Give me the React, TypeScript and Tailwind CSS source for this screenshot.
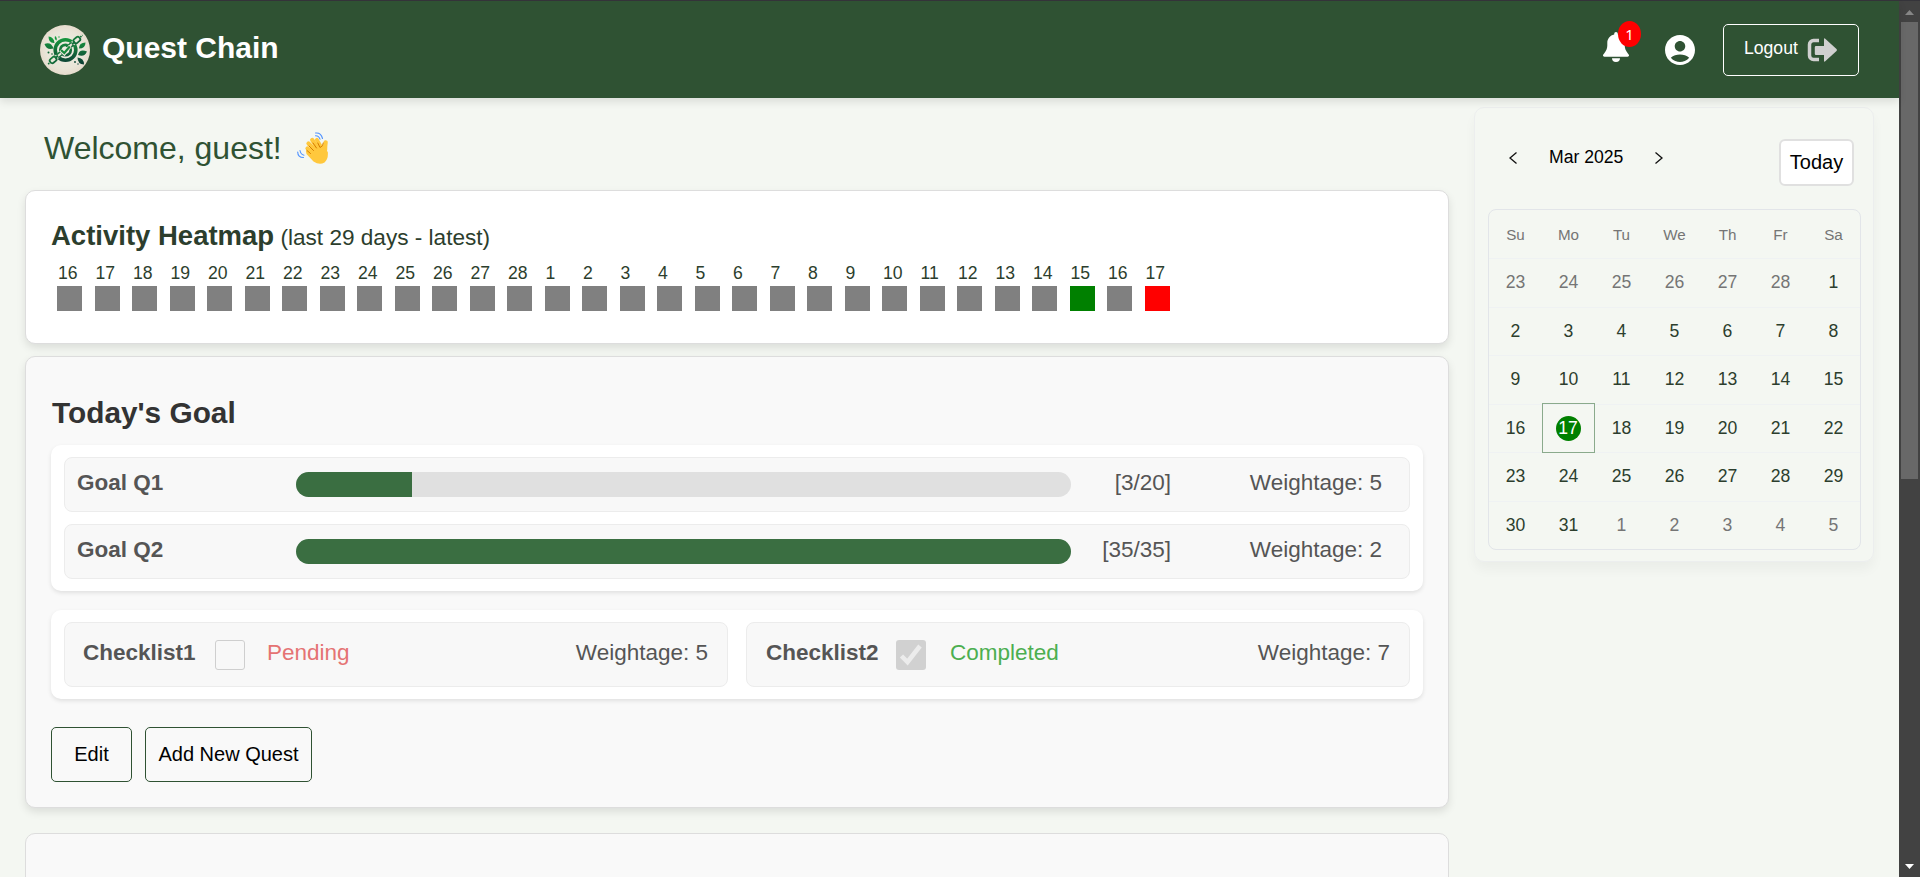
import React from "react";

const heat: [number, string][] = [
  ...[16, 17, 18, 19, 20, 21, 22, 23, 24, 25, 26, 27, 28, 1, 2, 3, 4, 5, 6, 7, 8, 9, 10, 11, 12, 13, 14].map(
    (d): [number, string] => [d, "bg-[#808080]"],
  ),
  [15, "bg-[#008000]"],
  [16, "bg-[#808080]"],
  [17, "bg-[#ff0000]"],
];

const weeks = [
  [23, 24, 25, 26, 27, 28, 1],
  [2, 3, 4, 5, 6, 7, 8],
  [9, 10, 11, 12, 13, 14, 15],
  [16, 17, 18, 19, 20, 21, 22],
  [23, 24, 25, 26, 27, 28, 29],
  [30, 31, 1, 2, 3, 4, 5],
];

function Logo() {
  return (
    <svg viewBox="0 0 50 50" className="mt-px h-[50px] w-[50px]">
      <defs>
        <linearGradient id="leaf" x1="0" y1="10" x2="0" y2="40" gradientUnits="userSpaceOnUse">
          <stop offset="0" stopColor="#17a23f" />
          <stop offset="0.5" stopColor="#14703a" />
          <stop offset="1" stopColor="#0b3a33" />
        </linearGradient>
        <radialGradient id="disc">
          <stop offset="0" stopColor="#eeeee2" />
          <stop offset="0.75" stopColor="#e9e5d8" />
          <stop offset="1" stopColor="#e6dccd" />
        </radialGradient>
      </defs>
      <circle cx="25" cy="25" r="25" fill="url(#disc)" />
      <g fill="none" stroke="url(#leaf)">
        <circle cx="25.500" cy="25" r="10.300" strokeWidth="3.600" />
        <circle cx="25.500" cy="25" r="5.200" strokeWidth="2.800" />
      </g>
      <g fill="url(#leaf)">
        <path d="M8.500 11.500q5.500.500 6 6.500q-6 .500-6-6.500z" />
        <path d="M4.500 19q6.500-2.500 9 4.500q-7 2-9-4.500z" />
        <path d="M15 11q2.500 1.500 1.500 4.500q-2.500-1.500-1.500-4.500z" />
        <path d="M47 26.500q-7.500-3-9 3.500q6.500 2.500 9-3.500z" />
        <path d="M45.500 17.500q-6.500 0-6.500 6q6.500 0 6.500-6z" />
        <path d="M44 39.500q-6.500-.500-6.500-7q6.500.500 6.500 7z" />
        <circle cx="8.500" cy="27.500" r="1" />
        <circle cx="12" cy="29" r=".8" />
        <circle cx="35" cy="37" r=".9" />
        <circle cx="38" cy="39" r=".7" />
        <circle cx="19" cy="12" r=".7" />
      </g>
      <g transform="rotate(-40 25 25)" fill="none">
        <path d="M9 25H20M30 25H41" stroke="#e9e7da" strokeWidth="4.600" />
        <g stroke="url(#leaf)" strokeWidth="1.800">
          <path d="M3 25h3M45 25h3" strokeDasharray="1.500 1" />
          <rect x="6" y="22.600" width="7" height="4.800" rx="2" fill="#e9e7da" />
          <rect x="37" y="22.600" width="7" height="4.800" rx="2" fill="#e9e7da" />
          <path d="M12 25h4M34 25h4" />
          <path d="M15 23.300h7M15 26.700h7M28 23.300h7M28 26.700h7" strokeWidth="1.400" />
        </g>
      </g>
      <path d="M20.500 25l3.800 3.500 6-7.500" fill="none" stroke="#e9e7da" strokeWidth="3.600" />
      <path d="M21 25l3.300 3 5.500-6.500" fill="none" stroke="#168a3c" strokeWidth="2.200" />
    </svg>
  );
}

function Wave() {
  return (
    <svg viewBox="0 0 32 32" className="h-8 w-8">
      <g fill="none" stroke="#ffc83d" strokeLinecap="round">
        <path d="M10.500 16.500L19 24" strokeWidth="4.200" />
        <path d="M11.500 11.500L20 20" strokeWidth="4.200" />
        <path d="M15.200 8L22 18" strokeWidth="4.200" />
        <path d="M19.800 7.800L24 15" strokeWidth="3.800" />
        <path d="M28.600 10.500Q28 14 28 18" strokeWidth="4.400" />
      </g>
      <path
        d="M9 19.500Q8.500 17.500 11 18L20 11L26 14L30.800 20Q31.500 27 27.500 30.500Q22.500 33.500 16.500 29.500L9.500 22Z"
        fill="#ffc83d"
      />
      <g fill="none" stroke="#d67d00" strokeWidth="1" strokeLinecap="round">
        <path d="M10 18.500l3.500 3M12 14l4.500 4.500M16 11l3.500 5M20.800 11l2.200 4.500Q26.300 14.500 26.300 11" />
      </g>
      <g fill="none" stroke="#5092ff" strokeWidth="1.100" strokeLinecap="round">
        <path d="M18.500 1Q24 .300 25.500 6.500M18.500 3.700Q21.800 3.500 23 7.200M.700 20Q.800 25.500 6.500 25.500M3 18.500Q3.800 22.500 7 23.200" />
      </g>
    </svg>
  );
}

function Goal({ name, pct, count, weight }: { name: string; pct: number; count: string; weight: number }) {
  return (
    <div className="flex h-[55px] items-center rounded-lg border border-[#ececec] bg-[#f8f8f8] pl-3">
      <div className="w-[219px] pb-[3px] font-bold">{name}</div>
      <div className="h-[25px] w-[775px] overflow-hidden rounded-[12.5px] bg-[#e0e0e0]">
        <div className="h-full bg-[#3a6e41]" style={{ width: `${pct}%` }} />
      </div>
      <div className="w-[100px] pb-[3px] text-right">{count}</div>
      <div className="w-[211px] pb-[3px] text-right">Weightage: {weight}</div>
    </div>
  );
}

function Check({ name, done, weight }: { name: string; done: boolean; weight: number }) {
  return (
    <div className="flex h-[65px] flex-1 items-center rounded-lg border border-[#ececec] bg-[#f8f8f8] pr-[19px] pl-[18px]">
      <div className={done ? "w-[131px] pb-[3px] pl-px font-bold" : "w-[132px] pb-[3px] font-bold"}>{name}</div>
      {done ? (
        <div className="flex h-[30px] w-[30px] items-center justify-center rounded-[3px] bg-[#d1d1d1]">
          <svg viewBox="0 0 30 30" className="h-[30px] w-[30px]">
            <path d="M5.500 16l6 6L24 6" fill="none" stroke="#ececec" strokeWidth="4.500" />
          </svg>
        </div>
      ) : (
        <div className="h-[30px] w-[30px] rounded-[3px] border border-[#cfcfcf]" />
      )}
      <div className={done ? "ml-[24px] pb-[3px] text-[#4caf50]" : "ml-[22px] pb-[3px] text-[#e57373]"}>
        {done ? "Completed" : "Pending"}
      </div>
      <div className="ml-auto pb-[3px]">Weightage: {weight}</div>
    </div>
  );
}

export default function App() {
  return (
    <div className="flex h-[877px] w-[1920px] flex-col overflow-hidden bg-[#f4f7f2] font-['Liberation_Sans',Arial,sans-serif] text-[#2c3e2d]">
      <div className="h-px shrink-0 bg-[#35343a]" />
      <div className="flex min-h-0 flex-1">
        <div className="flex w-[1899px] flex-col">
          <header className="z-10 flex h-[97px] shrink-0 items-center bg-[#2f5233] pr-[40px] pb-px pl-10 text-white shadow-[0_4px_8px_rgba(0,0,0,0.1)]">
            <Logo />
            <div className="ml-[12px] pb-[2px] text-[30px] leading-[36px] font-bold">Quest Chain</div>
            <div className="ml-auto flex items-center">
              <div className="relative h-[30px] w-[26px]">
                <svg viewBox="0 0 26 30" className="-mt-[2px] h-[30px] w-[26px]" fill="#fff">
                  <path d="M13 0a1.800 1.800 0 0 0-1.800 1.800v.8C7 3.500 4.300 6.800 4.300 11v2.600c0 3-1 5.200-3 7.600-.9 1-1.300 1.500-1.300 2.400C0 24.300.6 24.800 1.400 24.800h23.200c.8 0 1.400-.5 1.400-1.200 0-.9-.4-1.400-1.300-2.400-2-2.400-3-4.600-3-7.600V11c0-4.200-2.700-7.500-6.900-8.400v-.8A1.800 1.800 0 0 0 13 0zM9 26.300h8a4 3.700 0 0 1-8 0z" />
                </svg>
                <div className="absolute -top-[13px] left-[15px] flex h-[26px] w-[23px] items-center justify-center rounded-[50%] bg-[#ff0000] font-['Noto_Sans'] text-[15px] leading-none">
                  1
                </div>
              </div>
              <svg viewBox="2 2 20 20" className="mt-px ml-[36px] h-[30px] w-[30px]" fill="#fff">
                <path d="M12 2C6.480 2 2 6.480 2 12s4.480 10 10 10 10-4.480 10-10S17.520 2 12 2zm0 4c1.930 0 3.500 1.570 3.500 3.500S13.930 13 12 13s-3.500-1.570-3.500-3.500S10.070 6 12 6zm0 14c-2.030 0-4.430-.82-6.140-2.880C7.550 15.800 9.680 15 12 15s4.450.8 6.140 2.120C16.430 19.180 14.030 20 12 20z" />
              </svg>
              <div className="mt-[2px] ml-[28px] flex h-[52px] w-[136px] items-center rounded-[5px] border border-white pl-[20px] text-[17.6px]">
                <span className="pb-[3px]">Logout</span>
                <svg viewBox="0 0 30 24" className="ml-[9px] h-6 w-[30px]" fill="#d0d0d0">
                  <path d="M12 2.500H6.500A4 4 0 0 0 2.500 6.500v11A4 4 0 0 0 6.500 21.500H12" fill="none" stroke="#d0d0d0" strokeWidth="3.500" />
                  <path d="M9 8h8V1.500q0-2 1.500-.6l11 10.100q.8 1 0 2l-11 10.100q-1.500 1.400-1.500-.6V17H9q-1.200 0-1.200-1.200V9.200Q7.800 8 9 8z" />
                </svg>
              </div>
            </div>
          </header>
          <div className="flex min-h-0 flex-1">
            <main className="ml-[25px] flex w-[1424px] flex-col">
              <div className="flex h-[92px] shrink-0 items-center pt-[8px] pl-[19px] text-[32px] leading-[36px] text-[#2f5233]">
                <span>Welcome, guest!</span>
                <span className="-mt-px ml-[15px]">
                  <Wave />
                </span>
              </div>
              <section className="h-[154px] shrink-0 rounded-[10px] border border-[#ddd] bg-white pt-[29px] pl-[25px] shadow-[0_4px_8px_rgba(0,0,0,0.1)]">
                <div className="h-[31px] text-[22.6px] leading-[31px] whitespace-nowrap">
                  <span className="text-[27.5px] font-bold">Activity Heatmap</span> (last 29 days - latest)
                </div>
                <div className="mt-[12px] flex gap-[12.5px] pl-[6px]">
                  {heat.map(([d, c], i) => (
                    <div key={i} className="w-[25px]">
                      <div className="h-[23px] pl-px text-[17.6px] leading-[20px]">{d}</div>
                      <div className={`h-[25px] w-[25px] ${c}`} />
                    </div>
                  ))}
                </div>
              </section>
              <section className="mt-3 h-[452px] shrink-0 rounded-[10px] border border-[#ddd] bg-[#f9f9f9] pt-[38px] pr-[25px] pl-[25px] text-[22.5px] leading-[28px] text-[#555] shadow-[0_4px_8px_rgba(0,0,0,0.1)]">
                <h2 className="h-[50px] pl-px text-[29.800px] leading-[36px] font-bold text-[#333]">Today's Goal</h2>
                <div className="flex h-[146px] flex-col gap-3 rounded-[10px] bg-white px-[13px] pt-3 shadow-[0_2px_4px_rgba(0,0,0,0.1)]">
                  <Goal name="Goal Q1" pct={15} count="[3/20]" weight={5} />
                  <Goal name="Goal Q2" pct={100} count="[35/35]" weight={2} />
                </div>
                <div className="mt-[19px] flex h-[89px] gap-[18px] rounded-[10px] bg-white px-[13px] pt-3 shadow-[0_2px_4px_rgba(0,0,0,0.1)]">
                  <Check name="Checklist1" done={false} weight={5} />
                  <Check name="Checklist2" done={true} weight={7} />
                </div>
                <div className="mt-[28px] flex gap-[13px] text-[20px] text-black">
                  <button className="h-[55px] w-[81px] rounded-[5px] border border-[#2f5233] pb-[2px]">Edit</button>
                  <button className="h-[55px] w-[167px] rounded-[5px] border border-[#2f5233] pb-[2px]">Add New Quest</button>
                </div>
              </section>
              <section className="mt-[25px] h-[200px] shrink-0 rounded-[10px] border border-[#ddd] bg-[#f9f9f9]" />
            </main>
            <aside className="mt-[9px] ml-[25px] flex h-[455px] w-[400px] flex-col rounded-[10px] border border-[#eceeee] px-[13px] shadow-[0_8px_12px_rgba(0,0,0,0.04)]">
              <div className="flex h-[101px] pt-[31px] text-black">
                <svg viewBox="0 0 8 12" className="mt-[13px] ml-[21px] h-3 w-2" fill="none" stroke="#111" strokeWidth="1.300">
                  <path d="M7.500.5L1 6l6.500 5.500" />
                </svg>
                <div className="mt-[7px] ml-[32px] w-[75px] text-[17.6px] leading-[22px] whitespace-nowrap">Mar 2025</div>
                <svg viewBox="0 0 8 12" className="mt-[13px] ml-[31px] h-3 w-2" fill="none" stroke="#111" strokeWidth="1.300">
                  <path d="M.5.5L7 6 .5 11.500" />
                </svg>
                <button className="mr-[6px] ml-auto h-[47px] w-[75px] rounded-[6px] border-2 border-[#e0e0e0] bg-white pb-[1px] text-[20px]">
                  Today
                </button>
              </div>
              <div className="h-[341px] w-[373px] rounded-lg border border-[#e2e5e9]">
                <div className="grid h-[49px] grid-cols-7 border-b border-[#eff2f3] pt-[2px] text-[15.200px] text-[#757575]">
                  {["Su", "Mo", "Tu", "We", "Th", "Fr", "Sa"].map((d) => (
                    <div key={d} className="flex items-center justify-center">
                      {d}
                    </div>
                  ))}
                </div>
                {weeks.map((w, r) => (
                  <div
                    key={r}
                    className={`grid h-[48.500px] grid-cols-7 text-[17.6px] ${r < 5 ? "border-b border-[#eff2f3]" : ""}`}
                  >
                    {w.map((d, c) => {
                      const muted = (r === 0 && d > 20) || (r === 5 && d < 20);
                      const today = r === 3 && d === 17;
                      return (
                        <div
                          key={c}
                          className={
                            today
                              ? "-mt-[2px] -mb-px flex items-center justify-center border border-[#8aaa8c] text-white"
                              : muted
                                ? "flex items-center justify-center pb-px text-[#757575]"
                                : "flex items-center justify-center pb-px"
                          }
                        >
                          {today ? (
                            <span className="mt-px mr-px flex h-[25px] w-[25px] items-center justify-center rounded-full bg-[#008000] pb-px">
                              {d}
                            </span>
                          ) : (
                            d
                          )}
                        </div>
                      );
                    })}
                  </div>
                ))}
              </div>
            </aside>
          </div>
        </div>
        <div className="flex w-[21px] flex-col items-center bg-[#424242]">
          <svg viewBox="0 0 9 5" className="mt-[9px] h-[5px] w-[9px]" fill="#868686">
            <path d="M0 5L4.500 0 9 5z" />
          </svg>
          <div className="mt-[7px] h-[457px] w-[17px] bg-[#686868]" />
          <svg viewBox="0 0 9 5" className="mt-auto mb-[8px] h-[5px] w-[9px]" fill="#fff">
            <path d="M0 0L4.500 5 9 0z" />
          </svg>
        </div>
      </div>
    </div>
  );
}
